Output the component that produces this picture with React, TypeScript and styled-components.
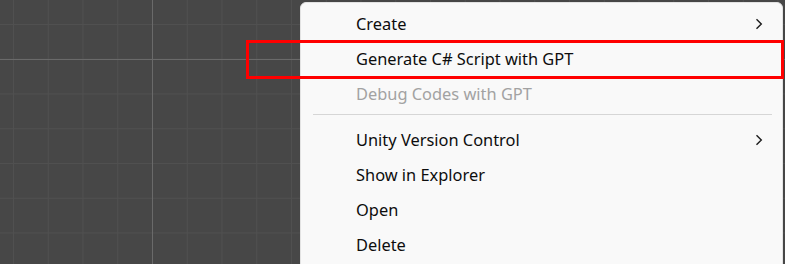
import { createGlobalStyle, styled } from 'styled-components';

const GlobalStyle = createGlobalStyle`
  html, body {
    margin: 0;
    padding: 0;
    width: 785px;
    height: 264px;
    overflow: hidden;
    background: #474747;
  }
`;

const Canvas = styled.div`
  position: relative;
  width: 785px;
  height: 264px;
  overflow: hidden;
  background-color: #474747;
  background-image:
    linear-gradient(to right, #6a6a6a 0, #6a6a6a 1px, transparent 1px),
    linear-gradient(to bottom, #6a6a6a 0, #6a6a6a 1px, transparent 1px),
    linear-gradient(to right, #505050 0, #505050 1px, transparent 1px),
    linear-gradient(to bottom, #505050 0, #505050 1px, transparent 1px);
  background-size: 1px 100%, 100% 1px, 34.75px 100%, 100% 34.75px;
  background-position: 152px 0, 0 59px, 13px 0, 0 24px;
  background-repeat: no-repeat, no-repeat, repeat, repeat;
`;

const Menu = styled.ul`
  position: absolute;
  left: 300px;
  top: 2px;
  width: 483px;
  height: 290px;
  margin: 0;
  padding: 3px 0 0;
  list-style: none;
  box-sizing: border-box;
  background: #f9f9f9;
  border: 1px solid #e3e3e3;
  border-radius: 6px 6px 0 0;
  font-family: 'Noto Sans', 'Open Sans', sans-serif;
  font-size: 16.4px;
`;

const Item = styled.li<{ $disabled?: boolean }>`
  display: flex;
  align-items: center;
  justify-content: space-between;
  height: 35px;
  padding: 0 19px 0 55px;
  color: ${(p) => (p.$disabled ? '#a2a2a2' : '#0d0d0d')};
`;

const Separator = styled.li`
  height: 1px;
  margin: 3px 10px 7px 12px;
  background: #d6d6d6;
`;

const Highlight = styled.div`
  position: absolute;
  left: 246px;
  top: 40px;
  width: 538px;
  height: 39px;
  box-sizing: border-box;
  border: 3.5px solid #ff0000;
`;

const Chevron = () => (
  <svg width="8" height="12" viewBox="0 0 8 12">
    <path d="M1.5 1.2 L6.3 6 L1.5 10.8" fill="none" stroke="#1c1c1c" strokeWidth="1.4" />
  </svg>
);

export default function App() {
  return (
    <>
      <GlobalStyle />
      <Canvas>
        <Menu>
          <Item>
            <span>Create</span>
            <Chevron />
          </Item>
          <Item>
            <span>Generate C# Script with GPT</span>
          </Item>
          <Item $disabled>
            <span>Debug Codes with GPT</span>
          </Item>
          <Separator />
          <Item>
            <span>Unity Version Control</span>
            <Chevron />
          </Item>
          <Item>
            <span>Show in Explorer</span>
          </Item>
          <Item>
            <span>Open</span>
          </Item>
          <Item>
            <span>Delete</span>
          </Item>
        </Menu>
        <Highlight />
      </Canvas>
    </>
  );
}
